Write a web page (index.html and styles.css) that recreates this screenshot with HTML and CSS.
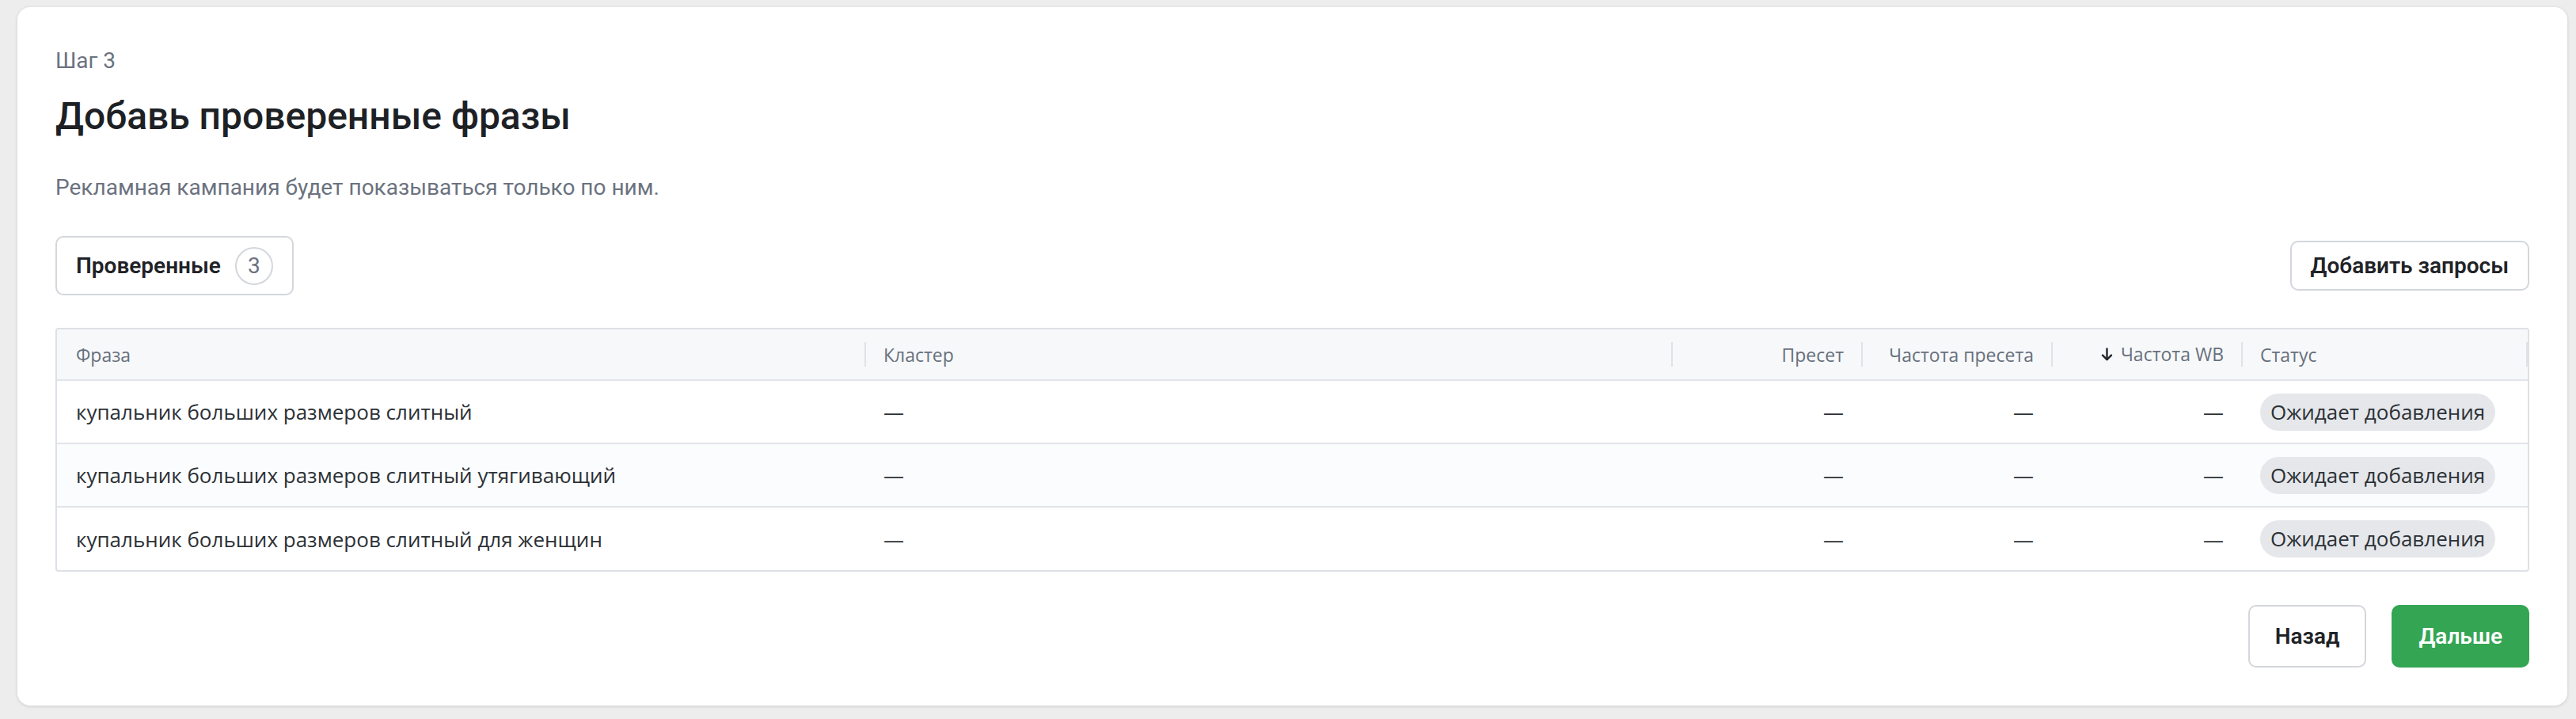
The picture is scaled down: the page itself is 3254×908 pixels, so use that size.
FILE: index.html
```html
<!DOCTYPE html>
<html lang="ru">
<head>
  <meta charset="UTF-8" />
  <meta name="viewport" content="width=device-width, initial-scale=1.0" />
  <title>Шаг 3 - Добавь проверенные фразы</title>
  <link rel="stylesheet" href="styles.css">
</head>
<body>
  <div class="page">
    <div class="card">
      <div class="step">Шаг 3</div>
      <h1 class="title">Добавь проверенные фразы</h1>
      <p class="subtitle">Рекламная кампания будет показываться только по ним.</p>

      <!-- Tabs + add button -->
      <div class="toolbar">
        <button class="tab" type="button">Проверенные <span class="count">3</span></button>
        <button class="btn" type="button">Добавить запросы</button>
      </div>

      <!-- Phrases table -->
      <div class="phrases">
        <div class="row head">
          <div class="cell">Фраза</div>
          <div class="cell">Кластер</div>
          <div class="cell num">Пресет</div>
          <div class="cell num">Частота пресета</div>
          <div class="cell num sorted">
            <svg class="sort-icon" width="15" height="17" viewBox="0 0 15 17" fill="none" stroke="#22262a" stroke-width="2.4" stroke-linecap="round" stroke-linejoin="round">
              <path d="M7.5 1.5v13.5" />
              <path d="M2 9.6L7.5 15.1 13 9.6" />
            </svg>
            Частота WB
          </div>
          <div class="cell last">Статус</div>
        </div>
        <div class="row">
          <div class="cell">купальник больших размеров слитный</div>
          <div class="cell">—</div>
          <div class="cell num">—</div>
          <div class="cell num">—</div>
          <div class="cell num">—</div>
          <div class="cell"><span class="status">Ожидает добавления</span></div>
        </div>
        <div class="row">
          <div class="cell">купальник больших размеров слитный утягивающий</div>
          <div class="cell">—</div>
          <div class="cell num">—</div>
          <div class="cell num">—</div>
          <div class="cell num">—</div>
          <div class="cell"><span class="status">Ожидает добавления</span></div>
        </div>
        <div class="row">
          <div class="cell">купальник больших размеров слитный для женщин</div>
          <div class="cell">—</div>
          <div class="cell num">—</div>
          <div class="cell num">—</div>
          <div class="cell num">—</div>
          <div class="cell"><span class="status">Ожидает добавления</span></div>
        </div>
      </div>

      <!-- Navigation -->
      <div class="actions">
        <button class="btn btn-lg" type="button">Назад</button>
        <button class="btn btn-lg btn-primary" type="button">Дальше</button>
      </div>
    </div>
  </div>
</body>
</html>
```

FILE: styles.css
```css
/* ------------------ Global Styles ------------------ */
body {
  margin: 0;
  background-color: #ededed;
  font-family: Roboto, "Liberation Sans", Arial, sans-serif;
  color: #1f2327;
}
.page {
  padding: 9px 11px 15px 22px;
}
.card {
  background: #fff;
  border-radius: 16px;
  padding: 48px;
  box-shadow: 0 1px 4px rgba(0,0,0,0.14);
}
.step {
  font-size: 28px;
  line-height: 40px;
  color: #6b7280;
}
.title {
  margin: 22px 0 0;
  font-size: 48px;
  line-height: 56px;
  font-weight: 500;
  color: #1d2125;
}
.subtitle {
  margin: 42px 0 0;
  font-size: 28px;
  line-height: 40px;
  color: #6b7280;
}

/* ------------------ Buttons ------------------ */
button {
  font-family: inherit;
  cursor: pointer;
}
.toolbar {
  margin-top: 41px;
  display: flex;
  justify-content: space-between;
  align-items: center;
}
.tab {
  display: flex;
  align-items: center;
  gap: 18px;
  height: 75px;
  padding: 0 24px;
  background: #fff;
  border: 2px solid #d3d7dc;
  border-radius: 10px;
  font-size: 28px;
  font-weight: 600;
  color: #1f2327;
}
.count {
  display: flex;
  align-items: center;
  justify-content: center;
  box-sizing: border-box;
  width: 48px;
  height: 48px;
  border: 2px solid #d3d7dc;
  border-radius: 50%;
  font-weight: 400;
  color: #6b7280;
}
.btn {
  height: 63px;
  padding: 0 24px;
  background: #fff;
  border: 2px solid #d3d7dc;
  border-radius: 10px;
  font-size: 28px;
  font-weight: 600;
  color: #1f2327;
}
.btn-lg {
  height: 79px;
  padding: 0 32px;
}
.btn-primary {
  background: #34a553;
  border-color: #34a553;
  color: #fff;
}
.actions {
  margin-top: 42px;
  display: flex;
  justify-content: flex-end;
  gap: 32px;
}

/* ------------------ Table ------------------ */
.phrases {
  margin-top: 41px;
  border: 2px solid #dde1e6;
  border-radius: 4px;
  overflow: hidden;
  font-family: "Open Sans", "Noto Sans", sans-serif;
}
.row {
  display: grid;
  grid-template-columns: 1020px 1019px 240px 240px 240px 1fr;
  align-items: center;
  box-sizing: border-box;
  height: 80px;
  border-bottom: 2px solid #e1e4e8;
  font-size: 26px;
  color: #2c3136;
}
.row:nth-child(odd) {
  background: #fbfcfd;
}
.row:last-child {
  height: 79px;
  border-bottom: 0;
}
.row.head {
  height: 65px;
  background: #f7f8fa;
  font-size: 23px;
  color: #67707c;
}
.cell {
  padding: 0 24px;
  white-space: nowrap;
}
.cell.num {
  text-align: right;
  padding-right: 22px;
}
.head .cell {
  line-height: 65px;
  height: 63px;
}
.head .cell + .cell {
  background: linear-gradient(#dfe2e6, #dfe2e6) left center / 2px 31px no-repeat;
}
.head .cell.last {
  background:
    linear-gradient(#dfe2e6, #dfe2e6) left center / 2px 31px no-repeat,
    linear-gradient(#dfe2e6, #dfe2e6) right center / 2px 31px no-repeat;
}
.sorted {
  display: flex;
  align-items: center;
  justify-content: flex-end;
  gap: 10px;
}
.sort-icon {
  flex: none;
}
.status {
  display: inline-block;
  height: 47px;
  line-height: 47px;
  padding: 0 13px;
  border-radius: 24px;
  background: #e5e7eb;
  color: #2c3136;
}
```
